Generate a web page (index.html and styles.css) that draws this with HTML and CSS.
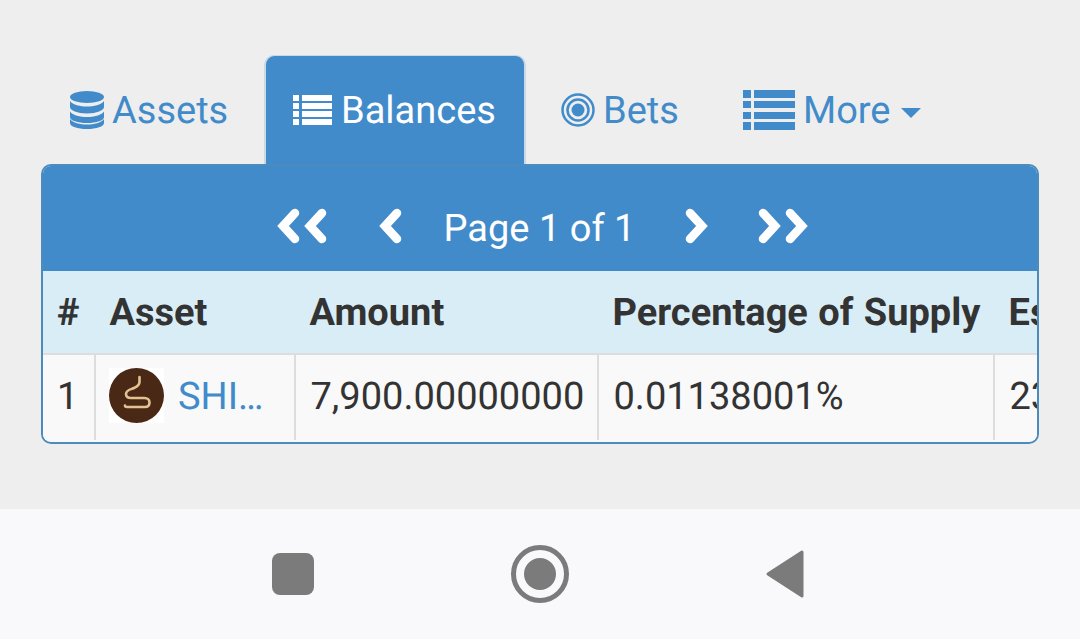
FILE: index.html
```html
<!DOCTYPE html>
<html lang="en">
<head>
<meta charset="utf-8">
<title>Balances</title>
<link rel="stylesheet" href="styles.css">
</head>
<body>
<main class="content">
  <ul class="tabs">
    <li class="tab">
      <a class="tab-link">
        <svg class="icon icon-db" viewBox="0 0 34 38"><ellipse cx="17" cy="6" rx="17" ry="6"/><path d="M0 10c3 4 10 5.500 17 5.500S31 14 34 10v6c0 3.500-7.500 6.500-17 6.500S0 19.500 0 16z"/><path d="M0 20c3 4 10 5.500 17 5.500S31 24 34 20v5.500c0 3.500-7.500 6-17 6s-17-2.500-17-6z" transform="translate(0 .5)"/><path d="M0 28c3 4 10 5.500 17 5.500S31 32 34 28v4c0 3.500-7.500 6-17 6s-17-2.500-17-6z"/></svg>
        <span class="tab-text">Assets</span>
      </a>
    </li>
    <li class="tab tab-active">
      <a class="tab-link">
        <svg class="icon icon-list" viewBox="0 0 39 30"><path d="M0 0h6v6H0zM9 0h30v6H9zM0 8h6v6H0zM9 8h30v6H9zM0 16h6v6H0zM9 16h30v6H9zM0 24h6v6H0zM9 24h30v6H9z"/></svg>
        <span class="tab-text">Balances</span>
      </a>
    </li>
    <li class="tab">
      <a class="tab-link">
        <svg class="icon icon-target" viewBox="0 0 34 34"><circle cx="17" cy="17" r="15.500" class="ring"/><circle cx="17" cy="17" r="10.500" class="ring"/><circle cx="17" cy="17" r="6.500"/></svg>
        <span class="tab-text">Bets</span>
      </a>
    </li>
    <li class="tab">
      <a class="tab-link">
        <svg class="icon icon-more" viewBox="0 0 52 40"><path d="M0 0h8v8H0zM11 0h41v8H11zM0 11h8v7H0zM11 11h41v7H11zM0 22h8v7H0zM11 22h41v7H11zM0 32h8v8H0zM11 32h41v8H11z"/></svg>
        <span class="tab-text">More</span>
        <span class="caret"></span>
      </a>
    </li>
  </ul>

  <section class="panel">
    <div class="pager">
      <svg class="chev chev-double" viewBox="0 0 52 36"><path d="M19 5 7 18l12 13M46 5 34 18l12 13"/></svg>
      <svg class="chev chev-single" viewBox="0 0 24 36"><path d="M18 5 6 18l12 13"/></svg>
      <span class="page-label">Page 1 of 1</span>
      <svg class="chev chev-single" viewBox="0 0 24 36"><path d="M6 5l12 13L6 31"/></svg>
      <svg class="chev chev-double chev-end" viewBox="0 0 52 36"><path d="M6 5l12 13L6 31M33 5l12 13-12 13"/></svg>
    </div>
    <div class="table-wrap">
      <table class="data">
        <colgroup>
          <col class="c-num"><col class="c-asset"><col class="c-amount"><col class="c-pct"><col class="c-est">
        </colgroup>
        <thead>
          <tr><th>#</th><th>Asset</th><th>Amount</th><th>Percentage of Supply</th><th>Estimated</th></tr>
        </thead>
        <tbody>
          <tr>
            <td>1</td>
            <td>
              <span class="asset">
                <span class="thumb">
                  <svg viewBox="0 0 55 55"><circle cx="27.500" cy="27.500" r="27.500" fill="#4a2816"/><path d="M30.500 9v5c0 3-2 4.500-5.500 6-3.500 1.500-8 2-8 6 0 3 2.500 4 5 4h13.500c3 0 5 2 5 4.500S39 39 36 39H18c-1.500 0-2-1-2-1.500" fill="none" stroke="#e2c292" stroke-width="2.600" stroke-linecap="round"/></svg>
                </span>
                <a class="asset-name">SHI…</a>
              </span>
            </td>
            <td>7,900.00000000</td>
            <td>0.01138001%</td>
            <td>23</td>
          </tr>
        </tbody>
      </table>
    </div>
  </section>
</main>
<nav class="sysbar">
  <span class="sys-square"></span>
  <span class="sys-home"><span class="sys-dot"></span></span>
  <svg class="sys-back" viewBox="0 0 40 50"><path d="M37 3v44L3 25z" stroke-linejoin="round"/></svg>
</nav>
</body>
</html>
```
FILE: styles.css
```css
* { box-sizing: border-box; }
html, body { margin: 0; height: 639px; overflow: hidden; }
body {
  display: flex;
  flex-direction: column;
  background: #eeeeee;
  font-family: Roboto, "Liberation Sans", sans-serif;
  font-size: 38px;
  color: #333333;
  text-rendering: geometricPrecision;
}
.content { flex: 1; padding: 55px 41px 0; min-height: 0; }

.tabs {
  display: flex;
  list-style: none;
  margin: 0;
  padding: 0;
  height: 109px;
}
.tab-link {
  display: flex;
  align-items: center;
  height: 109px;
  color: #428bca;
}
.tab-text { margin-top: 2px; }
.tab:nth-child(1) { width: 223px; padding-left: 29px; }
.tab:nth-child(2) { width: 262px; padding-left: 27px; }
.tab:nth-child(3) { width: 217px; padding-left: 35px; }
.tab-active {
  background: #428bca;
  border: 2px solid #c9d9e6;
  border-top-width: 1px;
  border-bottom: 0;
  border-radius: 10px 10px 0 0;
}
.tab-active .tab-link { color: #ffffff; height: 108px; }
.icon { fill: currentColor; flex: none; }
.icon-db { width: 34px; height: 38px; margin-right: 8px; }
.icon-list { width: 39px; height: 30px; margin-right: 9px; }
.icon-target { width: 34px; height: 34px; margin-right: 8px; }
.icon-more { width: 52px; height: 40px; margin-right: 8px; }
.ring { fill: none; stroke: currentColor; stroke-width: 2.500px; }
.caret {
  margin: 6px 0 0 10px;
  border-left: 10px solid transparent;
  border-right: 10px solid transparent;
  border-top: 10px solid currentColor;
}

.panel {
  height: 280px;
  border: 2px solid #4c8cbc;
  border-radius: 10px;
  overflow: hidden;
  background: #f9f9f9;
}
.pager {
  display: flex;
  align-items: center;
  justify-content: center;
  height: 105px;
  padding: 20px 0 0 5px;
  background: #428bca;
  color: #ffffff;
}
.chev {
  fill: none;
  stroke: #ffffff;
  stroke-width: 8.500px;
  stroke-linecap: round;
  stroke-linejoin: miter;
  height: 36px;
  margin-bottom: 6px;
}
.chev-double { width: 52px; }
.chev-single { width: 24px; }
.page-label { margin: 0 49px 0 41px; }
.chev-double + .chev-single { margin-left: 51px; }
.chev-end { margin-left: 49px; }

.table-wrap { overflow: hidden; }
.data {
  border-collapse: collapse;
  table-layout: fixed;
  width: 1150px;
  white-space: nowrap;
}
.c-num { width: 52px; }
.c-asset { width: 200px; }
.c-amount { width: 303px; }
.c-pct { width: 396px; }
.c-est { width: 199px; }
th, td { padding: 0 14.500px; text-align: left; overflow: hidden; }
th:first-child, td:first-child { padding-left: 14px; }
th {
  height: 83px;
  padding-top: 2px;
  background: #d9edf7;
  font-weight: 700;
  word-spacing: 1px;
  border-bottom: 2px solid #dddddd;
}
td {
  height: 86px;
  padding-bottom: 2px;
  background: #f9f9f9;
  border-left: 2px solid #dddddd;
}
td:first-child { border-left: 0; }
.asset { display: flex; align-items: center; gap: 14px; margin-left: -1.500px; }
.thumb {
  display: block;
  width: 55px;
  height: 55px;
  margin-bottom: 2px;
  background: #ffffff;
}
.thumb svg { display: block; width: 55px; height: 55px; }
.asset-name { color: #428bca; }

.sysbar {
  flex: none;
  display: flex;
  align-items: center;
  height: 130px;
  background: #f9f9fb;
}
.sys-square {
  margin-left: 272px;
  width: 42px;
  height: 42px;
  border-radius: 8px;
  background: #7b7b7b;
}
.sys-home {
  margin-left: 197px;
  display: flex;
  align-items: center;
  justify-content: center;
  width: 58px;
  height: 58px;
  border: 5px solid #7b7b7b;
  border-radius: 50%;
}
.sys-dot { width: 32px; height: 32px; border-radius: 50%; background: #7b7b7b; }
.sys-back { margin-left: 196px; width: 40px; height: 50px; fill: #7b7b7b; stroke: #7b7b7b; stroke-width: 3px; }
```
